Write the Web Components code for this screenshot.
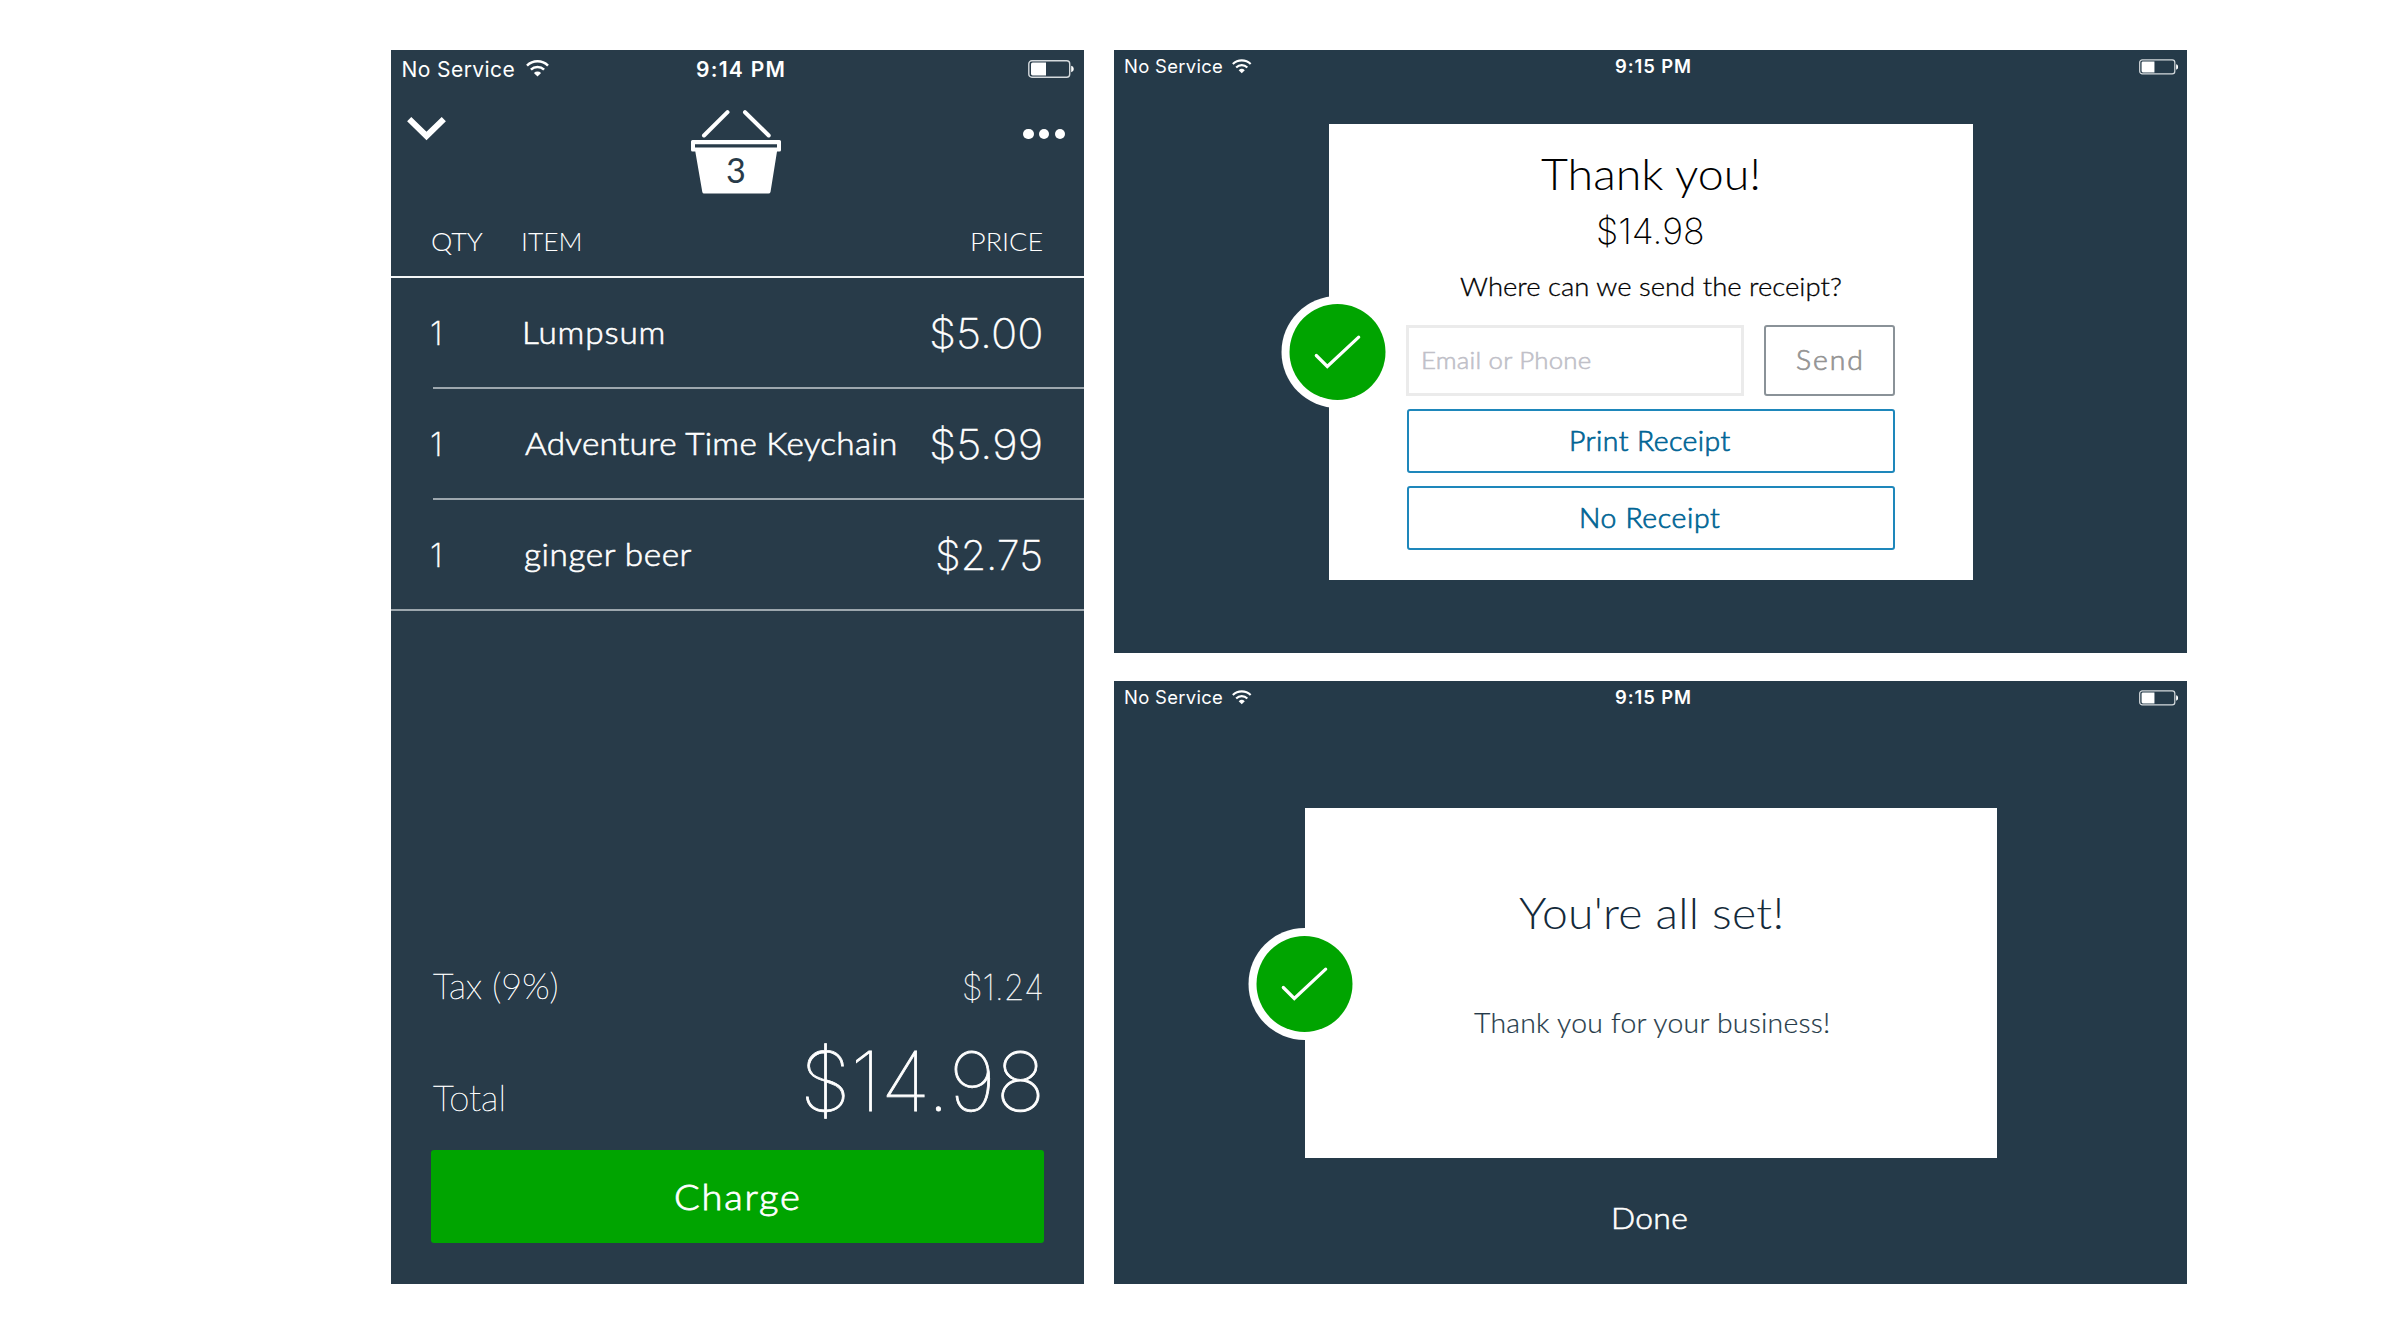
<!DOCTYPE html>
<html lang="en">
<head>
<meta charset="utf-8">
<title>Point of sale</title>
<style>
  body { margin: 0; background: #fff; width: 2400px; height: 1334px; overflow: hidden; font-family: Lato, "Open Sans", sans-serif; }
</style>
</head>
<body>
<pos-board></pos-board>
<script>
const define = (name, html, setup) => customElements.define(name, class extends HTMLElement {
  connectedCallback() {
    if (this.shadowRoot) return;
    const t = document.createElement('template');
    t.innerHTML = typeof html === 'function' ? html(this) : html;
    this.attachShadow({ mode: 'open' }).append(t.content.cloneNode(true));
    if (setup) setup(this);
  }
});

/* Text whose box is its cap height (cap) by its drawn width (w).
   "system" is the status bar face, "digits" the face for amounts. */
const pen = document.createElement('canvas').getContext('2d');
define('cap-text', '<style>:host{display:block;flex:none;white-space:nowrap}span{display:block;transform-origin:0 50%}</style><span></span>', el => {
  const cap = +el.getAttribute('cap'), w = +el.getAttribute('w');
  const weight = el.getAttribute('weight') || 300;
  const stroke = el.getAttribute('stroke') || 0;
  const system = el.hasAttribute('system'), digits = el.hasAttribute('digits');
  const family = system || digits ? 'Inter' : 'Lato';
  const size = cap / (family === 'Inter' ? 0.727 : 0.7165);
  const text = el.getAttribute('text');
  const span = el.shadowRoot.querySelector('span');
  pen.font = `${weight} ${size}px ${family}`;
  const m = pen.measureText(text);
  const ink = m.actualBoundingBoxRight + m.actualBoundingBoxLeft;
  const k = system ? 1 : Math.min(1.07, Math.max(0.84, w / ink));
  const gap = text.length > 1 ? (w / k - ink) / (text.length - 1) : 0;
  el.style.cssText += `;width:${w}px;height:${cap}px`;
  span.textContent = text;
  span.style.cssText = `font:${weight} ${size}px/${cap}px ${family}, sans-serif;letter-spacing:${gap}px;` +
    `margin-left:${m.actualBoundingBoxLeft * k}px;-webkit-text-stroke:${stroke}px currentColor;` +
    `transform:translateY(${(cap - m.fontBoundingBoxAscent + m.fontBoundingBoxDescent) / 2 + 0.4}px) scaleX(${k})`;
});

define('wifi-icon', `<style>:host{display:block;flex:none}svg{display:block;width:100%;height:100%}</style>
  <svg viewBox="0 0 23 17" fill="none" stroke="#fff" stroke-width="2.5">
    <path d="M1 5.6A15 15 0 0 1 22 5.6"/><path d="M4.9 9.6A9.4 9.4 0 0 1 18.1 9.6"/>
    <path d="M11.5 16.6L7.9 12.9A5.2 5.2 0 0 1 15.1 12.9Z" fill="#fff" stroke="none"/></svg>`);

define('battery-icon', `<style>:host{display:block;flex:none}svg{display:block;width:100%;height:100%}</style>
  <svg viewBox="0 0 46 18"><rect x=".8" y=".8" width="40.9" height="16.4" rx="3" fill="none" stroke="#d5dadd" stroke-width="1.4"/>
  <path d="M3 4.2Q3 2.6 4.6 2.6H18V15.4H4.6Q3 15.4 3 13.8Z" fill="#fff"/><path d="M43.2 5.8Q45.8 6.4 45.8 9T43.2 12.2Z" fill="#fff"/></svg>`);

define('status-bar', el => {
  const big = el.hasAttribute('large');
  return `<style>
    :host{display:flex;align-items:center;box-sizing:border-box;flex:none;height:${big ? 38 : 34}px;padding:0 ${big ? '10.5px 0 11.5px' : '9px 0 11px'}}
    wifi-icon{width:${big ? 23 : 19.5}px;height:${big ? 17 : 15}px;margin:0 ${big ? '148.5px 1px 11px' : '363.5px 1px 10px'}}
    battery-icon{margin-left:auto;width:${big ? 46 : 39.5}px;height:${big ? 18 : 15.8}px}
  </style>
  <cap-text system weight="400" cap="${big ? 15.3 : 13.4}" w="${big ? 112 : 97}" text="No Service"></cap-text>
  <wifi-icon></wifi-icon>
  <cap-text system weight="600" cap="${big ? 15.3 : 13.4}" w="${big ? 86.5 : 75}" text="${el.getAttribute('time')}"></cap-text>
  <battery-icon></battery-icon>`;
});

define('basket-badge', `<style>:host{display:grid;width:90px;height:84px;justify-items:center}
    svg,cap-text{grid-area:1/1}cap-text{color:#283b49;margin:49px 1px 0 0}</style>
  <svg width="90" height="84" viewBox="0 0 90 84" fill="#fff">
    <path d="M13 25.5L36.5 2.2M54 2.2L77.7 25.5" stroke="#fff" stroke-width="4" stroke-linecap="round"/>
    <path fill-rule="evenodd" d="M1.5 30H88.5Q90 30 90 31.5V40Q90 41.5 88.5 41.5H86L79.5 82Q79 83.5 77.5 83.5H13Q11.7 83.5 11.3 82L4.3 41.5H1.5Q0 41.5 0 40V31.5Q0 30 1.5 30ZM4 34.2V37.6H86V34.2Z"/>
  </svg>
  <cap-text weight="400" cap="24.5" w="17" text="3"></cap-text>`);

define('line-item', el => {
  const a = n => el.getAttribute(n);
  return `<style>
    :host{display:flex;align-items:center;box-sizing:border-box;flex:none;padding:0 43.5px 0 41px}
    .name{margin-left:85px}.price{margin-left:auto}
  </style>
  <cap-text digits weight="200" stroke=".3" cap="24" w="8" text="1"></cap-text>
  <cap-text class="name" stroke=".6" cap="22.3" w="${a('nw')}" text="${a('name')}"></cap-text>
  <cap-text class="price" digits weight="200" stroke=".3" cap="29.6" w="${a('pw')}" text="${a('price')}"></cap-text>`;
});

define('cart-screen', `<style>
    :host{display:flex;flex-direction:column;width:693px;height:1234px;background:#283b49;color:#fff}
    nav{display:flex;height:119px;flex:none}
    .chev{margin:29px 0 0 16px}
    basket-badge{margin:22px 0 0 245px}
    .dots{display:flex;gap:5.4px;margin:40.5px 19.3px 0 auto}
    .dots i{width:10.2px;height:10.2px;border-radius:50%;background:#fff}
    header{display:flex;align-items:center;height:69px;flex:none;border-bottom:2px solid #f4f6f7;padding:0 42px 0 41.5px}
    header .item{margin-left:39px} header .price{margin-left:auto}
    line-item{height:109px}
    hr{margin:0 0 0 42px;border:0;height:2px;background:#9da7ae;flex:none}
    hr.full{margin:0}
    .row{display:flex;justify-content:space-between;align-items:flex-end;padding:0 42px 0 41.5px}
    .tax{margin-top:auto;margin-bottom:50.7px}
    .total{padding-right:45px;margin-bottom:40px}
    button{all:unset;display:flex;justify-content:center;align-items:center;height:93px;margin:0 40.5px 41px 40px;border-radius:3px;background:#00a400;flex:none}
  </style>
  <status-bar large time="9:14 PM"></status-bar>
  <nav>
    <svg class="chev" width="39" height="24" viewBox="0 0 39 24" fill="none" stroke="#fff" stroke-width="6"><path d="M2.2 2.2L19.5 19L36.8 2.2"/></svg>
    <basket-badge></basket-badge>
    <div class="dots"><i></i><i></i><i></i></div>
  </nav>
  <header>
    <cap-text cap="18.5" w="51.5" text="QTY"></cap-text>
    <cap-text class="item" cap="18.5" w="57" text="ITEM"></cap-text>
    <cap-text class="price" cap="18.5" w="70" text="PRICE"></cap-text>
  </header>
  <line-item name="Lumpsum" nw="138" price="$5.00" pw="109.5"></line-item><hr>
  <line-item name="Adventure Time Keychain" nw="371" price="$5.99" pw="109"></line-item><hr>
  <line-item name="ginger beer" nw="167" price="$2.75" pw="103.5"></line-item><hr class="full">
  <div class="row tax"><cap-text weight="200" stroke=".5" cap="25.8" w="123.5" text="Tax (9%)"></cap-text><cap-text digits weight="100" stroke=".3" cap="25.8" w="78" text="$1.24"></cap-text></div>
  <div class="row total"><cap-text weight="200" stroke=".5" cap="25.5" w="69.5" text="Total"></cap-text><cap-text digits weight="100" stroke=".8" cap="59.5" w="233" text="$14.98"></cap-text></div>
  <button><cap-text stroke=".8" cap="25.5" w="122" text="Charge"></cap-text></button>`);

define('check-badge', `<style>:host{display:block;width:113px;height:112px}svg{display:block}</style>
  <svg width="113" height="112" viewBox="0 0 113 112"><circle cx="56.5" cy="56" r="56" fill="#fff"/><circle cx="56.5" cy="56" r="48" fill="#00a400"/>
  <path d="M35.3 59.5L46.3 70.5L77.7 41.2" fill="none" stroke="#fff" stroke-width="3.2" stroke-linecap="round"/></svg>`);

define('result-card', `<style>
    :host{display:flex;flex-direction:column;align-items:center;position:relative;box-sizing:border-box;background:#fff;flex:none}
    check-badge{position:absolute;left:var(--badge-x);top:var(--badge-y)}
  </style><slot></slot><check-badge></check-badge>`);

define('outline-button', `<style>:host{display:flex;align-items:center;justify-content:center;box-sizing:border-box;border:2px solid #1e87bb;border-radius:3px;color:#006595}</style><slot></slot>`);

const landscape = ':host{display:flex;flex-direction:column;width:1073px;background:#253a49;color:#fff}';

define('receipt-screen', `<style>${landscape}
    :host{height:603px}
    result-card{--badge-x:-48.5px;--badge-y:172px;margin:40px 0 0 215px;width:643.5px;height:455.5px;padding-top:35px;color:#000}
    .title{margin-right:2px}
    .amount{margin:27.5px 1.5px 0 0}.ask{margin:33px 1px 0 0}
    .send{display:flex;justify-content:space-between;width:489px;height:71px;margin-top:29.4px;flex:none}
    .field{display:flex;align-items:center;box-sizing:border-box;width:338px;border:3px solid #ebebeb;padding:0 0 2px 14px;color:#c0c0c8}
    .send outline-button{width:131.5px;border-color:#8a9298;color:#949494}
    .wide{width:487.5px;height:64.5px;margin-top:12.7px;flex:none}
  </style>
  <status-bar time="9:15 PM"></status-bar>
  <result-card>
    <cap-text class="title" cap="31.5" w="218" text="Thank you!"></cap-text>
    <cap-text class="amount" digits weight="200" cap="26" w="105" text="$14.98"></cap-text>
    <cap-text class="ask" stroke=".3" cap="18.7" w="381" text="Where can we send the receipt?"></cap-text>
    <div class="send">
      <div class="field"><cap-text stroke=".6" cap="17.3" w="168" text="Email or Phone"></cap-text></div>
      <outline-button><cap-text stroke=".7" cap="19" w="64" text="Send"></cap-text></outline-button>
    </div>
    <outline-button class="wide"><cap-text stroke=".7" cap="19" w="159" text="Print Receipt"></cap-text></outline-button>
    <outline-button class="wide"><cap-text stroke=".7" cap="19" w="138.5" text="No Receipt"></cap-text></outline-button>
  </result-card>`);

define('done-screen', `<style>${landscape}
    :host{height:603px}
    result-card{--badge-x:-56.5px;--badge-y:119.5px;margin:93px 0 0 190.5px;width:692.5px;height:349.5px;padding-top:90px;color:#142a3a}
    .title{margin-right:2px}
    .sub{margin:84.5px 0 0 3px;color:#253a49}
    .done{margin:49px auto 0}
  </style>
  <status-bar time="9:15 PM"></status-bar>
  <result-card>
    <cap-text class="title" cap="31" w="262" text="You're all set!"></cap-text>
    <cap-text class="sub" stroke=".2" cap="19" w="357" text="Thank you for your business!"></cap-text>
  </result-card>
  <cap-text class="done" stroke=".6" cap="21.3" w="73" text="Done"></cap-text>`);

define('pos-board', `<style>
    :host{display:flex;gap:30px;padding:50px 0 0 391px}
    main{display:flex;flex-direction:column;gap:28px}
  </style>
  <cart-screen></cart-screen>
  <main><receipt-screen></receipt-screen><done-screen></done-screen></main>`);
</script>
</body>
</html>
